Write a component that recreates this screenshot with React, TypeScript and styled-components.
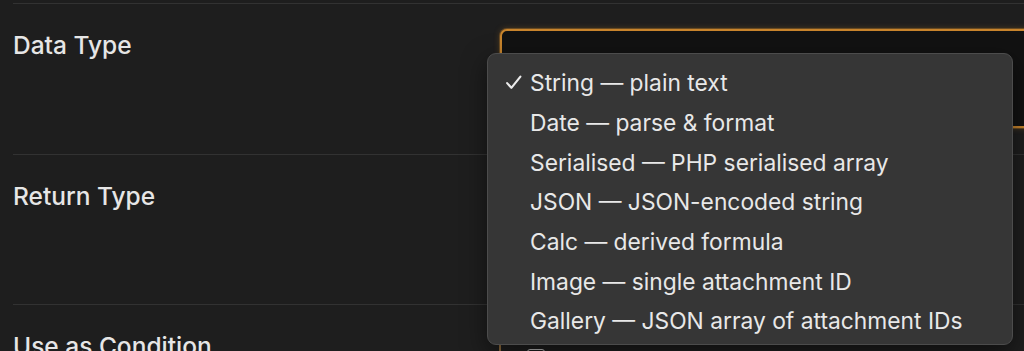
import React from "react";
import styled, { createGlobalStyle } from "styled-components";

const Global = createGlobalStyle`
  html, body {
    margin: 0;
    padding: 0;
    background: #1e1e1e;
    overflow: hidden;
  }
  body {
    font-family: Inter, "Noto Sans", "Liberation Sans", sans-serif;
    color: #e4e4e4;
    -webkit-font-smoothing: antialiased;
  }
`;

const Page = styled.div`
  width: 1024px;
  height: 351px;
  padding: 3px 0 0 13px;
  box-sizing: border-box;
  overflow: hidden;
`;

const Row = styled.section<{ $h: number }>`
  display: grid;
  grid-template-columns: 487px 1fr;
  min-height: ${(p) => p.$h}px;
  box-sizing: border-box;
  border-top: 1px solid #323232;
  padding-top: 25px;
`;

const Label = styled.div`
  font-size: 24.5px;
  line-height: 1.2;
  font-weight: 500;
  color: #e6e6e6;
  padding-top: 2px;
`;

const Control = styled.div`
  position: relative;
`;

const SelectBox = styled.div`
  width: 540px;
  height: 99px;
  box-sizing: border-box;
  background: #121212;
  border: 2px solid #c8842c;
  border-radius: 7px;
  box-shadow: 0 0 0 1px rgba(200, 132, 44, 0.35), 0 0 6px rgba(200, 132, 44, 0.35);
`;

const Menu = styled.ul`
  position: absolute;
  left: -13px;
  top: 24px;
  width: 526px;
  height: 292px;
  box-sizing: border-box;
  margin: 0;
  padding: 9px 0 5px;
  list-style: none;
  background: #363636;
  border: 1px solid #4c4c4c;
  border-radius: 9px;
  box-shadow: 0 8px 24px rgba(0, 0, 0, 0.5);
  z-index: 10;
`;

const Item = styled.li`
  display: grid;
  grid-template-columns: 25px 1fr;
  align-items: center;
  height: 39.7px;
  padding-left: 17px;
  font-size: 22.8px;
  color: #e8e8e8;
  white-space: nowrap;
`;

const Check = styled.span`
  display: flex;
  align-items: center;
  color: #ececec;
`;

const OptionCard = styled.div`
  margin-top: 10px;
  margin-left: -1px;
  height: 60px;
  box-sizing: border-box;
  border-left: 2px solid #8d6a3b;
  display: flex;
  align-items: flex-start;
  padding: 9px 0 0 26px;
  gap: 11px;
`;

const Box = styled.span`
  width: 16px;
  height: 16px;
  border: 1.5px solid #bdbdbd;
  border-radius: 3px;
  flex: none;
`;

const OptionText = styled.span`
  font-size: 22.8px;
  color: #e4e4e4;
  white-space: nowrap;
`;

const options = [
  "String — plain text",
  "Date — parse & format",
  "Serialised — PHP serialised array",
  "JSON — JSON-encoded string",
  "Calc — derived formula",
  "Image — single attachment ID",
  "Gallery — JSON array of attachment IDs",
];

const CheckIcon = () => (
  <svg width="17" height="17" viewBox="0 0 16 16" fill="none">
    <path d="M2 8.6 L6 13 L14.5 2.5" stroke="currentColor" strokeWidth="2" strokeLinecap="round" strokeLinejoin="round" />
  </svg>
);

export default function App() {
  return (
    <>
      <Global />
      <Page>
        <Row $h={151}>
          <Label>Data Type</Label>
          <Control>
            <SelectBox />
            <Menu role="listbox">
              {options.map((o, i) => (
                <Item key={o} role="option" aria-selected={i === 0}>
                  <Check>{i === 0 ? <CheckIcon /> : null}</Check>
                  <span>{o}</span>
                </Item>
              ))}
            </Menu>
          </Control>
        </Row>
        <Row $h={150}>
          <Label>Return Type</Label>
          <Control />
        </Row>
        <Row $h={60}>
          <Label>Use as Condition</Label>
          <Control>
            <OptionCard>
              <Box />
              <OptionText>Expose this field in Reusable Conditions</OptionText>
            </OptionCard>
          </Control>
        </Row>
      </Page>
    </>
  );
}
